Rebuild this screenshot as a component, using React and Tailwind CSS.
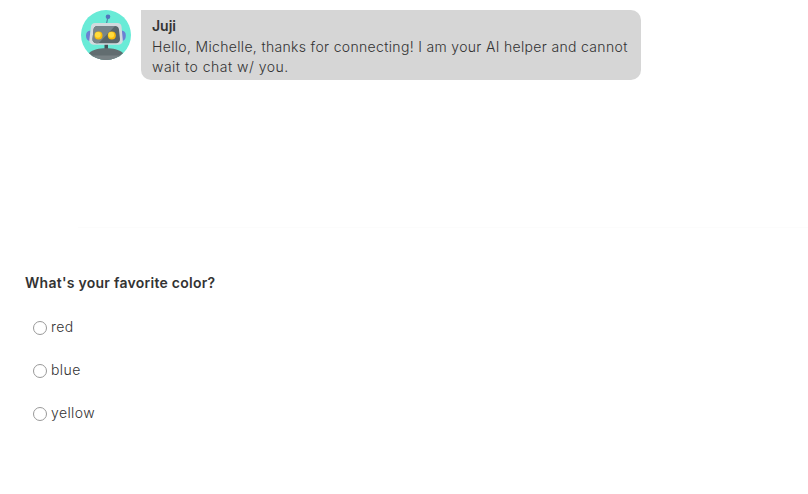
import React from "react";

function RobotAvatar() {
  return (
    <svg viewBox="0 0 50 50" className="h-[50px] w-[50px] shrink-0" aria-hidden="true">
      <defs>
        <clipPath id="disc"><circle cx="25" cy="25" r="25" /></clipPath>
        <clipPath id="face"><path d="M16.500 16h17.500a4 4 0 0 1 4 3.500l1 9.500a4 4 0 0 1-4 4.300H15.500a4 4 0 0 1-4-4.300l1-9.500a4 4 0 0 1 4-3.500z" /></clipPath>
      </defs>
      <g clipPath="url(#disc)">
        <rect width="50" height="50" fill="#69ebd7" />
        <path d="M26.800 8l-1.300 5.500" stroke="#4f8fa8" strokeWidth="1.200" />
        <circle cx="27" cy="6.800" r="2.300" fill="#5276bd" />
        <path d="M9.500 20.500c-3 .3-4.500 2-4.500 5s1.500 5.500 4 5.500z" fill="#6c80d3" />
        <path d="M40.500 20.500c3 .3 4.300 2 4.300 5s-1.300 5.500-4.300 5.500z" fill="#6c80d3" />
        <rect x="23.500" y="34" width="3.500" height="7" fill="#435257" />
        <path d="M8 43c4-3.500 10-4.700 17-4.700S38 39.500 42 43v8H8z" fill="#626d70" />
        <path d="M7 45.500h36V51H7z" fill="#788184" />
        <path d="M14 13h22.500a4 4 0 0 1 4 3.500l1.300 13.700a4 4 0 0 1-4 4.500H12.300a4 4 0 0 1-4-4.500L10 16.500a4 4 0 0 1 4-3.500z" fill="#d2dade" />
        <g clipPath="url(#face)">
          <rect x="11" y="15" width="29" height="20" fill="#59666a" />
          <path d="M11 15h24L16 35h-5z" fill="#77848a" />
        </g>
        <circle cx="17.500" cy="25.500" r="4" fill="#f9bc0b" />
        <circle cx="16.900" cy="24.800" r="2.900" fill="#ffdc3e" />
        <circle cx="30.800" cy="25.500" r="4" fill="#f9bc0b" />
        <circle cx="30.200" cy="24.800" r="2.900" fill="#ffdc3e" />
      </g>
    </svg>
  );
}

function Choice({ label, className }) {
  return (
    <label className="flex h-[43px] items-center text-[14px] font-light text-[#333]">
      <input type="radio" name="color" className="mt-[2px] mr-[4px] h-[14px] w-[14px] appearance-none rounded-full border border-[#999] bg-white" />
      <span className={className}>{label}</span>
    </label>
  );
}

export default function App() {
  return (
    <main className="h-[494px] w-[808px] overflow-hidden bg-white font-['Inter',sans-serif] text-[#333]">
      <section className="ml-[78px] h-[228px] border-b border-[#fcfcfc] pt-[10px] pl-[3px]">
        <div className="flex items-start gap-[10px]">
          <RobotAvatar />
          <div className="h-[70px] w-[500px] rounded-[10px] rounded-tl-none bg-[#d6d6d6] pt-[7px] pl-[11px] text-[14px] leading-5">
            <div className="-mt-px mb-px font-semibold"><span>Juji</span></div>
            <p className="whitespace-nowrap font-light">
              <span className="tracking-[0.33px]">Hello, Michelle, thanks for connecting! I am your AI helper and cannot</span>
              <br />
              <span className="tracking-[0.49px]">wait to chat w/ you.</span>
            </p>
          </div>
        </div>
      </section>
      <form className="pt-[45px]">
        <h2 className="ml-[25px] text-[14px] leading-5 font-semibold"><span className="tracking-[0.27px]">What's your favorite color?</span></h2>
        <div className="mt-[12px] ml-[33px]">
          <Choice label="red" className="tracking-[0.4px]" />
          <Choice label="blue" className="tracking-[0.4px]" />
          <Choice label="yellow" className="tracking-[0.4px]" />
        </div>
      </form>
    </main>
  );
}
